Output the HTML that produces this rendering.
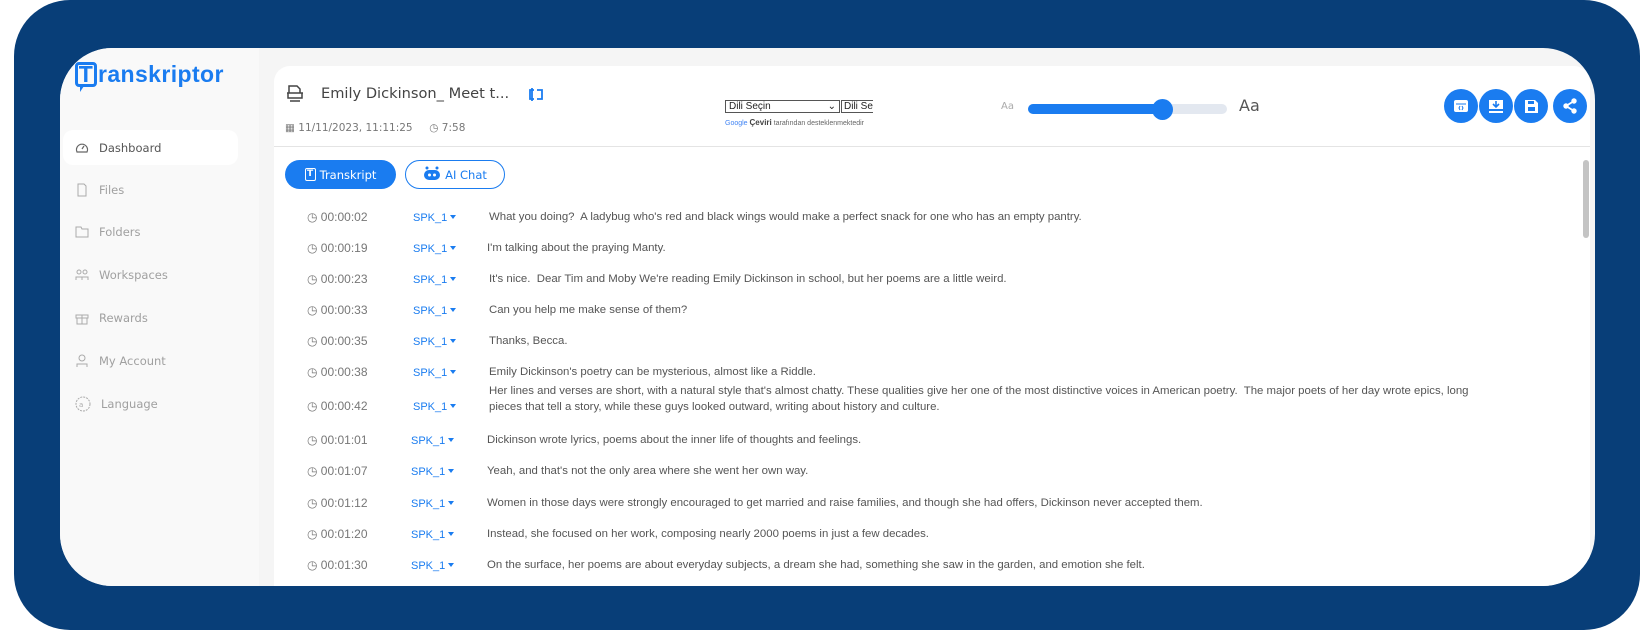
<!DOCTYPE html>
<html><head><meta charset="utf-8"><style>
*{margin:0;padding:0;box-sizing:border-box}
body{width:1640px;height:630px;background:#fff;position:relative;overflow:hidden;font-family:"DejaVu Sans","Liberation Sans",sans-serif}
.outer2{position:absolute;left:14px;top:0;width:1626px;height:630px;background:#083e78;border-radius:56px}
.card{position:absolute;left:60px;top:48px;width:1535px;height:538px;background:#f5f5f5;border-radius:52px;overflow:hidden}
.side{position:absolute;left:0;top:0;width:199px;height:538px;background:#f9f9f9}
.logo{position:absolute;left:15px;top:13px;font:bold 23px "Liberation Sans",sans-serif;color:#1a7cf0;letter-spacing:0.4px}
.logo .t{display:inline-block;width:22px;height:25px;border:3px solid #1a7cf0;border-radius:4px;text-align:center;line-height:19px;margin-right:1px;position:relative}
.logo .t:after{content:"";position:absolute;left:2px;bottom:-8px;border-left:4px solid #1a7cf0;border-bottom:6px solid transparent;border-right:3px solid transparent}
.nav{position:absolute;left:3px;width:175px;height:35px;font-size:11.5px;color:#a0a0a0;display:flex;align-items:center;padding-left:12px}
.nav.act{background:#fff;border-radius:10px;color:#555}
.nav svg{margin-right:10px}
.main{position:absolute;left:214px;top:18px;width:1316px;height:530px;background:#fff;border-radius:16px 16px 0 0}
.abs{position:absolute}
.rows{position:absolute;left:0;top:10px;width:1316px;height:530px;font-family:"Liberation Sans",sans-serif}
.tm{position:absolute;left:33px;color:#777;font-size:12px;white-space:nowrap}
.spk{position:absolute;left:139px;color:#1a7cf0;font-size:11px;white-space:nowrap;margin-top:2px}
.spk:after{content:"";display:inline-block;margin-left:3px;border-left:3px solid transparent;border-right:3px solid transparent;border-top:4px solid #1a7cf0;vertical-align:2px}
.tx{position:absolute;left:215px;font-size:11.4px;color:#555;line-height:16px;white-space:nowrap}
.cb{position:absolute;width:34px;height:34px;border-radius:50%;background:#1a7cf0;display:flex;align-items:center;justify-content:center}
</style></head><body>
<div class="outer2"></div>
<div class="card">
 <div class="side">
  <div class="logo"><span class="t">T</span>ranskriptor</div>
  <div class="nav act" style="top:82px"><svg width="14" height="12" viewBox="0 0 14 12"><path d="M2 10A5.5 5.5 0 1 1 12 10Z" fill="none" stroke="#666" stroke-width="1.2"/><path d="M7 7L9 4" stroke="#666" stroke-width="1.2"/></svg>Dashboard</div>
  <div class="nav" style="top:124px"><svg width="14" height="14" viewBox="0 0 14 14"><path d="M3 1H9L11 3V13H3Z" fill="none" stroke="#aaa"/></svg>Files</div>
  <div class="nav" style="top:166px"><svg width="14" height="12" viewBox="0 0 14 12"><path d="M1 1H6L7 3H13V11H1Z" fill="none" stroke="#aaa"/></svg>Folders</div>
  <div class="nav" style="top:209px"><svg width="14" height="12" viewBox="0 0 14 12"><circle cx="4" cy="3" r="2" fill="none" stroke="#aaa"/><circle cx="10" cy="3" r="2" fill="none" stroke="#aaa"/><path d="M1 11V8H7V11M7 8H13V11" fill="none" stroke="#aaa"/></svg>Workspaces</div>
  <div class="nav" style="top:252px"><svg width="14" height="14" viewBox="0 0 14 14"><path d="M1 4H13V7H1ZM2 7V13H12V7M7 4V13" fill="none" stroke="#aaa"/></svg>Rewards</div>
  <div class="nav" style="top:295px"><svg width="14" height="14" viewBox="0 0 14 14"><circle cx="7" cy="4" r="3" fill="none" stroke="#aaa"/><path d="M2 13V10H12V13" fill="none" stroke="#aaa"/></svg>My Account</div>
  <div class="nav" style="top:338px"><svg width="16" height="16" viewBox="0 0 16 16"><circle cx="8" cy="8" r="7" fill="none" stroke="#aaa" stroke-dasharray="2 1"/><text x="4" y="11" font-size="7" fill="#aaa">a</text></svg>Language</div>
 </div>
 <div class="main">
  <svg class="abs" style="left:12px;top:19px" width="18" height="18" viewBox="0 0 18 18"><path d="M3 8V1H11L14 4V8M1 8H17M2 8V13H16V8M4 16H14" fill="none" stroke="#444" stroke-width="1.5"/></svg>
  <div class="abs" style="left:47px;top:19px;font-size:14.6px;color:#444;white-space:nowrap">Emily Dickinson_ Meet t...</div>
  <svg class="abs" style="left:254px;top:22px" width="16" height="13" viewBox="0 0 16 13"><path d="M6 2H2V11H6M4 0V13M9 2H14V11H9" fill="none" stroke="#1a7cf0" stroke-width="1.8"/></svg>
  <div class="abs" style="left:11px;top:56px;font-size:10.5px;color:#777;white-space:nowrap">▦ 11/11/2023, 11:11:25 &nbsp;&nbsp;&nbsp; ◷ 7:58</div>
  <div class="abs" style="left:0;top:80px;width:1316px;height:1px;background:#e4e4e4"></div>
  <div class="abs" style="left:451px;top:34px;width:115px;height:13px;border:1px solid #555;font:10px 'Liberation Sans',sans-serif;color:#222;padding-left:3px;line-height:11px">Dili Seçin<span style="position:absolute;right:3px">⌄</span></div>
  <div class="abs" style="left:567px;top:34px;width:32px;height:13px;border:1px solid #555;border-right:none;font:10px 'Liberation Sans',sans-serif;color:#222;padding-left:2px;line-height:11px;overflow:hidden;white-space:nowrap">Dili Se</div>
  <div class="abs" style="left:451px;top:52px;font:7px 'Liberation Sans',sans-serif;color:#666;white-space:nowrap;width:150px;overflow:hidden"><span style="color:#4285f4">Google</span> <b style="color:#444;font-size:8px">Çeviri</b> tarafından desteklenmektedir</div>
  <div class="abs" style="left:727px;top:35px;font-size:10px;color:#aaa">Aa</div>
  <div class="abs" style="left:754px;top:38px;width:199px;height:10px;border-radius:5px;background:#e3e8f0"></div>
  <div class="abs" style="left:754px;top:38px;width:140px;height:10px;border-radius:5px;background:#1a7cf0"></div>
  <div class="abs" style="left:878px;top:33px;width:21px;height:21px;border-radius:50%;background:#1a7cf0"></div>
  <div class="abs" style="left:965px;top:30px;font-size:16px;color:#555">Aa</div>
  <div class="cb" style="left:1170px;top:23px"><svg width="16" height="14" viewBox="0 0 16 14"><rect x="1" y="1" width="14" height="12" rx="2" fill="#fff"/><path d="M3 5H13" stroke="#1a7cf0"/><path d="M7 7L6 9L7 11M9 7L10 9L9 11" stroke="#1a7cf0" fill="none"/></svg></div>
  <div class="cb" style="left:1205px;top:23px"><svg width="16" height="15" viewBox="0 0 16 15"><path d="M1 1H15V10H1Z" fill="#fff"/><path d="M8 2V7M5 5L8 8L11 5" stroke="#1a7cf0" stroke-width="1.6" fill="none"/><rect x="1" y="12" width="14" height="2" fill="#fff"/></svg></div>
  <div class="cb" style="left:1240px;top:23px"><svg width="15" height="15" viewBox="0 0 15 15"><path d="M1 1H11L14 4V14H1Z" fill="#fff"/><rect x="4" y="2" width="6" height="3" fill="#1a7cf0"/><rect x="4" y="8" width="7" height="4" fill="#1a7cf0"/></svg></div>
  <div class="cb" style="left:1279px;top:23px"><svg width="16" height="16" viewBox="0 0 16 16"><circle cx="4" cy="8" r="2.7" fill="#fff"/><circle cx="12" cy="3" r="2.7" fill="#fff"/><circle cx="12" cy="13" r="2.7" fill="#fff"/><path d="M4 8L12 3M4 8L12 13" stroke="#fff" stroke-width="1.8"/></svg></div>
  <div class="abs" style="left:11px;top:94px;width:111px;height:29px;border-radius:15px;background:#1a7cf0;color:#fff;font-size:11.5px;display:flex;align-items:center;justify-content:center"><span style="display:inline-block;width:11px;height:13px;border:1.5px solid #fff;border-radius:2px;font-size:9px;line-height:10px;text-align:center;margin-right:4px;font-weight:bold">T</span>Transkript</div>
  <div class="abs" style="left:131px;top:94px;width:100px;height:29px;border-radius:15px;border:1px solid #1a7cf0;color:#1a7cf0;font-size:11.5px;display:flex;align-items:center;justify-content:center"><svg width="18" height="17" viewBox="0 0 18 17" style="margin-right:4px"><circle cx="4" cy="2" r="1.5" fill="#1a7cf0"/><circle cx="14" cy="2" r="1.5" fill="#1a7cf0"/><rect x="1" y="4" width="16" height="10" rx="5" fill="#1a7cf0"/><circle cx="6.5" cy="9" r="1.5" fill="#fff"/><circle cx="11.5" cy="9" r="1.5" fill="#fff"/></svg>AI Chat</div>
  <div class="abs" style="left:1309px;top:94px;width:6px;height:78px;border-radius:3px;background:#c4c4c4"></div>
  <div class="rows">
   <div class="tm" style="top:134px">◷ 00:00:02</div><div class="spk" style="top:134px">SPK_1</div><div class="tx" style="top:133px">What you doing?&nbsp; A ladybug who's red and black wings would make a perfect snack for one who has an empty pantry.</div>
   <div class="tm" style="top:165px">◷ 00:00:19</div><div class="spk" style="top:165px">SPK_1</div><div class="tx" style="top:164px;left:213px">I'm talking about the praying Manty.</div>
   <div class="tm" style="top:196px">◷ 00:00:23</div><div class="spk" style="top:196px">SPK_1</div><div class="tx" style="top:195px">It's nice.&nbsp; Dear Tim and Moby We're reading Emily Dickinson in school, but her poems are a little weird.</div>
   <div class="tm" style="top:227px">◷ 00:00:33</div><div class="spk" style="top:227px">SPK_1</div><div class="tx" style="top:226px">Can you help me make sense of them?</div>
   <div class="tm" style="top:258px">◷ 00:00:35</div><div class="spk" style="top:258px">SPK_1</div><div class="tx" style="top:257px">Thanks, Becca.</div>
   <div class="tm" style="top:289px">◷ 00:00:38</div><div class="spk" style="top:289px">SPK_1</div><div class="tx" style="top:288px">Emily Dickinson's poetry can be mysterious, almost like a Riddle.</div>
   <div class="tm" style="top:323px">◷ 00:00:42</div><div class="spk" style="top:323px">SPK_1</div><div class="tx" style="top:307px">Her lines and verses are short, with a natural style that's almost chatty. These qualities give her one of the most distinctive voices in American poetry.&nbsp; The major poets of her day wrote epics, long<br>pieces that tell a story, while these guys looked outward, writing about history and culture.</div>
   <div class="tm" style="top:357px">◷ 00:01:01</div><div class="spk" style="top:357px;left:137px">SPK_1</div><div class="tx" style="top:356px;left:213px">Dickinson wrote lyrics, poems about the inner life of thoughts and feelings.</div>
   <div class="tm" style="top:388px">◷ 00:01:07</div><div class="spk" style="top:388px;left:137px">SPK_1</div><div class="tx" style="top:387px;left:213px">Yeah, and that's not the only area where she went her own way.</div>
   <div class="tm" style="top:420px">◷ 00:01:12</div><div class="spk" style="top:420px;left:137px">SPK_1</div><div class="tx" style="top:419px;left:213px">Women in those days were strongly encouraged to get married and raise families, and though she had offers, Dickinson never accepted them.</div>
   <div class="tm" style="top:451px">◷ 00:01:20</div><div class="spk" style="top:451px;left:137px">SPK_1</div><div class="tx" style="top:450px;left:213px">Instead, she focused on her work, composing nearly 2000 poems in just a few decades.</div>
   <div class="tm" style="top:482px">◷ 00:01:30</div><div class="spk" style="top:482px;left:137px">SPK_1</div><div class="tx" style="top:481px;left:213px">On the surface, her poems are about everyday subjects, a dream she had, something she saw in the garden, and emotion she felt.</div>
  </div>
 </div>
</div>
</body></html>
